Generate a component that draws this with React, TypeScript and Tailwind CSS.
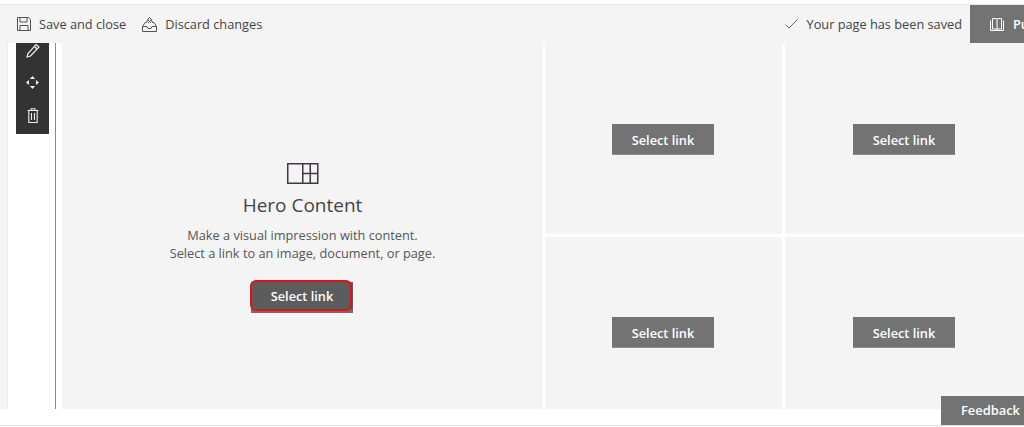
import React from 'react';

const font = { fontFamily: '"Open Sans", "Noto Sans", sans-serif' };

function SelectLink({ active }: { active?: boolean }) {
  if (active) {
    return (
      <button className="relative w-[102px] h-[31px] bg-[#5c5c5c] border-b-[3px] border-[#6f6f6f] text-white text-[12.75px] font-semibold">
        <span className="absolute left-[-1px] right-[1px] top-[-2px] bottom-[-1px] rounded-[6px] border-[2px] border-[#e3101f] flex items-center justify-center pt-[3px] pl-[2px]">
          Select link
        </span>
      </button>
    );
  }
  return (
    <button className="w-[102px] h-[31px] pt-[3px] bg-[#737373] border-b border-[#8c8c8c] text-white text-[12.75px] font-semibold">
      Select link
    </button>
  );
}

function Tile({ className }: { className: string }) {
  return (
    <div className={`bg-[#f4f4f4] flex justify-center pr-px ${className}`}>
      <SelectLink />
    </div>
  );
}

export default function App() {
  return (
    <div style={font} className="relative w-[1024px] h-[427px] overflow-hidden bg-white flex flex-col pt-1">
      <div className="h-[39px] shrink-0 bg-[#f4f4f4] border-t border-[#e3e8e8] flex items-center text-[12.75px] text-[#444]">
        <div className="flex items-center ml-[17px] gap-[8px]">
          <svg width="14" height="14" viewBox="0 0 14 14" fill="none" stroke="#555" strokeWidth="1">
            <path d="M.5.5h11l2 2v11H.5z" />
            <path d="M3 .5v4.500h7V.5M3 13.500V8.500h8v5" />
          </svg>
          <span className="pt-[2px]">Save and close</span>
        </div>
        <div className="flex items-center ml-[16px] gap-[8px]">
          <svg width="15" height="15" viewBox="0 0 15 15" fill="none" stroke="#555" strokeWidth="1">
            <path d="M.5 9.500 3 5.500h1.500L6 2l1.500-1.500L9 2l1.500 3.500H12l2.500 4v5H.5z" />
            <path d="M.5 9.500H5l1 2h3l1-2h4.500M6 3l3 3M9 3 6 6" />
          </svg>
          <span className="pt-[2px]">Discard changes</span>
        </div>
        <div className="ml-auto flex items-center h-full">
          <svg width="13" height="10" viewBox="0 0 13 10" fill="none" stroke="#666" strokeWidth="1" className="mr-[9px]">
            <path d="M.5 5.500 4 9l8.500-8.500" />
          </svg>
          <span className="mr-[8px] pt-[2px]">Your page has been saved</span>
          <div className="w-[54px] h-full bg-[#737373] flex items-center pl-[20px] gap-[9px] text-white font-semibold overflow-hidden whitespace-nowrap">
            <svg width="14" height="13" viewBox="0 0 14 13" fill="none" stroke="#fff" strokeWidth="1" className="shrink-0">
              <path d="M2.500.5h3.500c.6 0 1 .4 1 1 0-.6.400-1 1-1h3.500v10.500H8c-.6 0-1 .4-1 1 0-.6-.4-1-1-1H2.500zM7 1.500v10.500M.5 2.500V12.500h13V2.500" />
            </svg>
            <span className="pt-[2px]">Publish</span>
          </div>
        </div>
      </div>

      <div className="h-[366px] shrink-0 flex">
        <div className="w-[8px] bg-[#f4f4f4] border-r border-[#ececec]" />
        <div className="w-[47px] pl-[8px]">
          <div className="w-[33px] h-[91px] bg-[#333] flex flex-col items-center gap-[18px]">
            <svg width="14" height="15" viewBox="0 0 14 15" fill="none" stroke="#eee" strokeWidth="1.200">
              <path d="M10 1.500 13 4 4.500 13 1 14l1-3.500z" />
              <path d="M8.500 3.500 11 6" />
            </svg>
            <svg width="13" height="13" viewBox="0 0 14 14" fill="#f2f2f2">
              <path d="M7 0 9.800 3.200H4.200zM7 14 4.200 10.800H9.800zM0 7l3.200-2.800V9.800zM14 7l-3.200 2.800V4.200z" />
            </svg>
            <svg width="12" height="15" viewBox="0 0 12 15" fill="none" stroke="#eee" strokeWidth="1.100" className="mt-px">
              <path d="M.5 2.500h11M4 2.500V.8h4v1.700M1.800 2.500v12h8.400v-12M4.500 5v7M7.500 5v7" />
            </svg>
          </div>
        </div>
        <div className="w-px bg-[#8a8a8a]" />
        <div className="w-[6px]" />
        <div className="flex-1 flex gap-[2px]">
          <div className="w-[481px] bg-[#f4f4f4] flex flex-col items-center pt-[120px] text-[#555]">
            <svg width="32" height="21" viewBox="0 0 32 21" fill="none" stroke="#3f3a40" strokeWidth="1.500">
              <path d="M.75.75h30v19.500H.75zM15.750.75v19.500M15.750 10.500h15M23.250.75v19.500" />
            </svg>
            <div className="text-[19px] leading-[26px] mt-[8px] text-[#444]">Hero Content</div>
            <div className="text-[12.75px] leading-[18px] text-center mt-[8px]">
              Make a visual impression with content.
              <br />
              Select a link to an image, document, or page.
            </div>
            <div className="mt-[20px] mr-px">
              <SelectLink active />
            </div>
          </div>
          <div className="w-[237px] flex flex-col gap-[3px]">
            <Tile className="h-[191px] pt-[81px]" />
            <Tile className="flex-1 pt-[80px]" />
          </div>
          <div className="flex-1 ml-px flex flex-col gap-[3px]">
            <Tile className="h-[191px] pt-[81px]" />
            <Tile className="flex-1 pt-[80px]" />
          </div>
        </div>
      </div>

      <div className="h-[16px] shrink-0" />
      <div className="h-px shrink-0 bg-[#dcdcdc]" />

      <div className="absolute right-0 top-[396px] w-[83px] h-[29px] pt-px bg-[#737373] text-white text-[12.875px] font-semibold flex items-center pl-[20px] whitespace-nowrap">
        Feedback
      </div>
    </div>
  );
}
